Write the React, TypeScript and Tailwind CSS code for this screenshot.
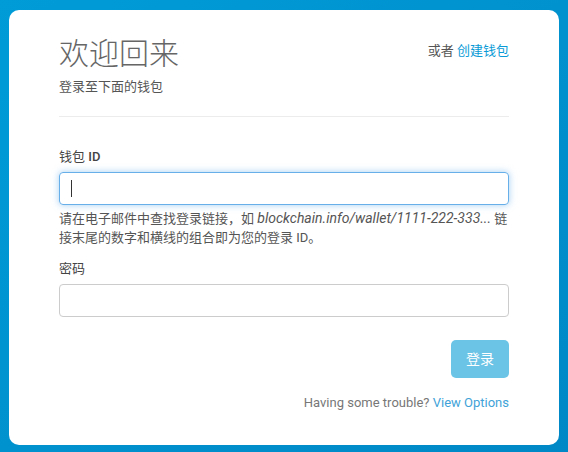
export default function App() {
  return (
    <div
      className="w-[568px] h-[452px] bg-gradient-to-br from-[#009cd8] to-[#0088c6] pt-[10px] pl-[9px] pr-[9px]"
      style={{ fontFamily: 'Roboto, "Noto Sans CJK SC", sans-serif' }}
    >
      <div className="w-[550px] h-[435px] bg-white rounded-[10px] px-[50px] pt-[23px]">
        {/* header */}
        <div className="flex justify-between items-start border-b border-[#ececec] pb-[20px]">
          <div>
            <h1
              className="h-[36px] text-[30px] leading-[36px] text-[#666] font-light"
              style={{ fontFamily: '"Noto Sans CJK SC", serif' }}
            >
              欢迎回来
            </h1>
            <p className="mt-[9px] h-[18px] text-[13px] leading-[18px] text-[#555]">登录至下面的钱包</p>
          </div>
          <div className="mt-[9px] h-[18px] text-[13px] leading-[18px] text-[#555]">
            或者 <a className="text-[#0a9ad6] cursor-pointer">创建钱包</a>
          </div>
        </div>

        {/* wallet id */}
        <label className="block mt-[31px] h-[18px] text-[13px] leading-[18px] text-[#444]">
          钱包 <span className="font-medium">ID</span>
        </label>
        <div className="relative mt-[6px]">
          <input
            type="text"
            className="block w-full h-[33px] rounded-[4px] border border-[#66afe9] px-3 text-[14px] outline-none caret-transparent shadow-[0_0_7px_rgba(102,175,233,0.6)]"
          />
          <span className="absolute left-[12px] top-[8px] w-px h-[17px] bg-[#333]" />
        </div>
        <p className="mt-[4px] h-[37px] text-[13px] leading-[18.5px] text-[#555]">
          请在电子邮件中查找登录链接，如{' '}
          <i className="italic text-[14px] leading-[18.5px]">blockchain.info/wallet/1111-222-333...</i> 链接末尾的数字和横线的组合即为您的登录 ID。
        </p>

        {/* password */}
        <label className="block mt-[14px] h-[18px] text-[13px] leading-[18px] text-[#444]">密码</label>
        <input
          type="password"
          className="block mt-[6px] w-full h-[33px] rounded-[4px] border border-[#cccccc] px-3 text-[14px] outline-none"
        />

        <div className="flex justify-end mt-[23px]">
          <button className="w-[58px] h-[38px] rounded-[5px] bg-[#6bc4e6] text-white text-[14px]">
            登录
          </button>
        </div>

        <p className="mt-[16px] h-[18px] text-right text-[13px] leading-[18px] text-[#777]">
          Having some trouble? <a className="text-[#3fa3d8] cursor-pointer">View Options</a>
        </p>
      </div>
    </div>
  );
}
